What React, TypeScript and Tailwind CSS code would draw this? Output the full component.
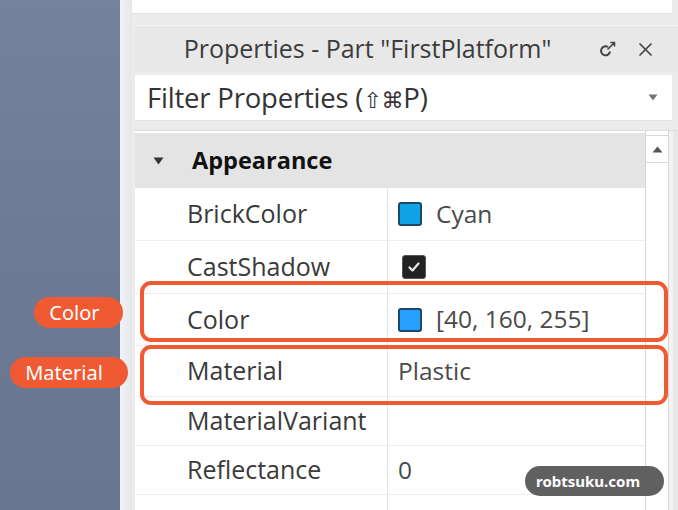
import React from "react";

const ui = { fontFamily: '"Open Sans", "DejaVu Sans", sans-serif' };
const pill = { fontFamily: '"Noto Sans", "Liberation Sans", sans-serif' };

type Row = { label: string; h: number; value?: React.ReactNode };

function Swatch({ color }: { color: string }) {
  return (
    <span
      className="inline-block w-[24px] h-[24px] shrink-0 rounded-[3px] border-2 border-[#1c4a66]"
      style={{ backgroundColor: color }}
    />
  );
}

function Check() {
  return (
    <span className="ml-[4px] inline-flex w-[24px] h-[24px] items-center justify-center rounded-[3px] bg-[#222] border border-[#555]">
      <svg width="16" height="16" viewBox="0 0 16 16">
        <path d="M3.5 8.5 L6.5 11.5 L12.5 4.5" fill="none" stroke="#e8e8e8" strokeWidth="2.2" strokeLinecap="round" strokeLinejoin="round" />
      </svg>
    </span>
  );
}

const rows: Row[] = [
  {
    label: "BrickColor",
    h: 53,
    value: (
      <span className="flex items-center gap-[14px]">
        <Swatch color="#12a2e6" />
        <span>Cyan</span>
      </span>
    ),
  },
  { label: "CastShadow", h: 53, value: <Check /> },
  {
    label: "Color",
    h: 52,
    value: (
      <span className="flex items-center gap-[14px]">
        <Swatch color="#28a0ff" />
        <span>[40, 160, 255]</span>
      </span>
    ),
  },
  { label: "Material", h: 51, value: <span>Plastic</span> },
  { label: "MaterialVariant", h: 49 },
  { label: "Reflectance", h: 49, value: <span>0</span> },
  { label: "Transparency", h: 49, value: <span>1</span> },
];

export default function App() {
  return (
    <div className="relative w-[678px] h-[510px] overflow-hidden flex bg-[#ececec]" style={ui}>
      {/* viewport edge */}
      <div className="w-[120px] h-full shrink-0 bg-gradient-to-b from-[#74829b] via-[#6c7a93] to-[#68768f]" />
      <div className="w-[12px] h-full shrink-0 bg-gradient-to-r from-[#f2f3f6] to-[#e6e7ea]" />

      {/* properties panel */}
      <div className="flex-1 min-w-0 flex flex-col overflow-hidden">
        <div className="h-[14px] shrink-0 bg-white mr-[6px] border-b border-[#e0e0e0]" />

        <div className="mt-[11px] ml-[3px] h-[47px] shrink-0 flex items-center bg-[#e8e8e8] border-t border-[#f6f6f6]">
          <div className="flex-1 whitespace-nowrap text-center text-[25px] text-[#3c3c3c] pl-[4px]">
            Properties - Part "FirstPlatform"
          </div>
          <div className="w-[82px] flex items-center gap-[20px] pl-[2px]">
            <svg width="20" height="20" viewBox="0 0 20 20">
              <path d="M10 8 A4.5 4.5 0 1 0 12 12.5" fill="none" stroke="#444" strokeWidth="2" />
              <path d="M10 10 L16.5 3.5 M13 3.5 H16.5 V7" fill="none" stroke="#444" strokeWidth="1.6" strokeLinecap="round" />
            </svg>
            <svg width="15" height="15" viewBox="0 0 15 15">
              <path d="M2 2 L13 13 M13 2 L2 13" stroke="#444" strokeWidth="1.7" strokeLinecap="round" />
            </svg>
          </div>
        </div>

        <div className="mt-[3px] ml-[3px] mr-[6px] h-[46px] shrink-0 bg-white flex items-center pl-[12px] pr-[14px] border-b border-[#e2e2e2]">
          <span className="flex-1 whitespace-nowrap text-[27.5px] text-[#333] tracking-[-0.2px]">
            Filter Properties (<span className="text-[22px]">⇧⌘</span>P)
          </span>
          <svg width="10" height="7" viewBox="0 0 10 7">
            <path d="M0.5 0.5 H9.5 L5 6.5 Z" fill="#777" />
          </svg>
        </div>

        <div className="mt-[9px] ml-[3px] flex-1 min-h-0 overflow-hidden flex border-t border-[#dcdcdc]">
          {/* property grid */}
          <div className="w-[510px] shrink-0 flex flex-col pt-[2px] bg-white">
            <div className="h-[55px] shrink-0 bg-[#e4e4e4] flex items-center pl-[18px] gap-[28px]">
              <svg width="11" height="8" viewBox="0 0 11 8">
                <path d="M0.5 0.5 H10.5 L5.5 7.5 Z" fill="#333" />
              </svg>
              <span className="text-[23.5px] font-bold text-[#111]">Appearance</span>
            </div>
            {rows.map((r) => (
              <div key={r.label} className="flex shrink-0 bg-white border-b border-[#eeeeee]" style={{ height: r.h }}>
                <div className="w-[253px] shrink-0 flex items-center pl-[52px] text-[25px] text-[#3a3a3a] border-r border-[#e3e3e3] whitespace-nowrap">
                  {r.label}
                </div>
                <div className="flex-1 flex items-center pl-[10px] text-[24.5px] text-[#4a4a4a] whitespace-nowrap">
                  {r.value}
                </div>
              </div>
            ))}
          </div>

          {/* scrollbar */}
          <div className="w-[24px] shrink-0 flex flex-col bg-white border-x border-[#d6d6d6]">
            <div className="h-[28px] mt-[4px] flex items-center justify-center border-y border-[#dadada]">
              <svg width="11" height="7" viewBox="0 0 11 7">
                <path d="M0.5 6.5 H10.5 L5.5 0.5 Z" fill="#555" />
              </svg>
            </div>
            <div className="flex-1" />
          </div>
          <div className="flex-1 bg-[#e6e6e6] border-l-4 border-[#f3f3f3]" />
        </div>
      </div>

      {/* highlights */}
      <div className="absolute left-[140px] top-[281px] w-[528px] h-[61px] rounded-[11px] border-[4px] border-[#f05a33]" />
      <div className="absolute left-[140px] top-[345px] w-[528px] h-[60px] rounded-[11px] border-[4px] border-[#f05a33]" />
      <div
        className="absolute left-[34px] top-[297px] w-[89px] h-[31px] rounded-full bg-[#f05a33] flex items-center justify-center pr-[8px] text-white text-[20px]"
        style={pill}
      >
        Color
      </div>
      <div
        className="absolute left-[10px] top-[357px] w-[118px] h-[31px] rounded-full bg-[#f05a33] flex items-center justify-center pr-[10px] text-white text-[20px]"
        style={pill}
      >
        Material
      </div>

      {/* site tag */}
      <div
        className="absolute left-[525px] top-[466px] w-[139px] h-[30px] rounded-full bg-[#4f4f4f]/90 flex items-center pl-[11px] text-white text-[15px] font-bold"
        style={pill}
      >
        robtsuku.com
      </div>
    </div>
  );
}
